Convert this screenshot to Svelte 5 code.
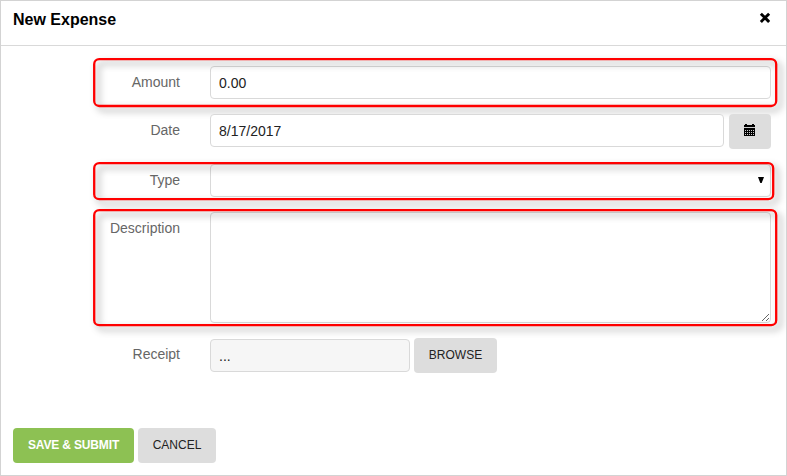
<script>
  let amount = $state('0.00');
  let date = $state('8/17/2017');
  let type = $state('');
  let description = $state('');
</script>

{#snippet ring(width, height)}
  <svg class="ring" {width} {height} aria-hidden="true">
    <rect x="1.2" y="1.2" width={width - 2.4} height={height - 2.4} rx="5" fill="none" stroke="#f00" stroke-width="2.3" />
  </svg>
{/snippet}

<section class="dialog">
  <header>
    <h1>New Expense</h1>
    <button class="close" type="button" aria-label="Close">
      <svg width="12" height="12" viewBox="0 0 12 12"><path d="M2.9 2.7 9.1 8.9M9.1 2.7 2.9 8.9" fill="none" stroke="#000" stroke-width="2.9" stroke-linecap="square" /></svg>
    </button>
  </header>

  <form>
    <div class="row amount">
      <label for="amount">Amount</label>
      <input id="amount" type="text" bind:value={amount} />
      {@render ring(684.4, 49.2)}
    </div>
    <div class="row date">
      <label for="date">Date</label>
      <input id="date" type="text" bind:value={date} />
      <button class="btn calendar" type="button" aria-label="Pick a date">
        <svg width="11" height="12" viewBox="0 0 11 12" shape-rendering="crispEdges">
          <path fill="#000" d="M1 0h2v1h5V0h2v1h1v2H0V1h1zM0 4h11v8H0z" />
          <path fill="#ccc" d="M0 3h11v1H0z" />
          <path fill="#ccc" d="M1 6h1v1H1zM3 6h1v1H3zM5 6h1v1H5zM7 6h1v1H7zM9 6h1v1H9zM1 8h1v1H1zM3 8h1v1H3zM5 8h1v1H5zM7 8h1v1H7zM9 8h1v1H9zM1 10h1v1H1zM3 10h1v1H3zM5 10h1v1H5zM7 10h1v1H7zM9 10h1v1H9z" />
        </svg>
      </button>
    </div>
    <div class="row type">
      <label for="type">Type</label>
      <div class="select">
        <select id="type" bind:value={type}><option value=""></option></select>
        <svg class="arrow" width="6" height="6" viewBox="0 0 6 6"><path d="M0 0h6L3.7 6H2.3z" fill="#000" /></svg>
      </div>
      {@render ring(681.4, 38.4)}
    </div>
    <div class="row description">
      <label for="description">Description</label>
      <textarea id="description" bind:value={description}></textarea>
      {@render ring(684.4, 117.4)}
    </div>
    <div class="row receipt">
      <label for="receipt">Receipt</label>
      <input id="receipt" type="text" value="..." readonly />
      <button class="btn browse" type="button">BROWSE</button>
    </div>
  </form>

  <footer>
    <button class="btn save" type="button">SAVE &amp; SUBMIT</button>
    <button class="btn cancel" type="button">CANCEL</button>
  </footer>
</section>

<style>
  :global(body) { margin: 0; background: #fff; }
  .dialog, .dialog * { box-sizing: border-box; font-family: "Liberation Sans", Arial, sans-serif; }
  .dialog {
    width: 787px;
    height: 476px;
    border: 1px solid #d3d3d3;
    display: flex;
    flex-direction: column;
    overflow: hidden;
    background: #fff;
  }
  header {
    height: 45px;
    flex: none;
    border-bottom: 1px solid #d9d9d9;
    display: flex;
    justify-content: space-between;
    align-items: flex-start;
    padding: 9px 15px 0 12px;
  }
  h1 { margin: 0; font-size: 16px; line-height: 20px; font-weight: 700; color: #000; }
  .close { border: 0; padding: 0; background: none; height: 12px; margin-top: 2px; }
  .close svg { display: block; }
  form { padding: 20px 15px 0 0; flex: 1; }
  .row { position: relative; display: flex; align-items: flex-start; }
  label {
    width: 179px;
    margin-right: 30px;
    flex: none;
    text-align: right;
    font-size: 14px;
    line-height: 32px;
    color: #666;
  }
  input, select, textarea {
    flex: 1;
    min-width: 0;
    height: 33px;
    margin: 0;
    padding: 0 8px;
    border: 1px solid #d9d9d9;
    border-radius: 4px;
    background: #fff;
    color: #222;
    font-size: 14px;
    outline: 0;
  }
  input { padding-top: 1px; }
  .select { position: relative; flex: 1; display: flex; }
  select { appearance: none; }
  .arrow { position: absolute; right: 7px; top: 13px; }
  textarea { height: 111px; resize: both; display: block; }
  .btn {
    height: 35px;
    border: 0;
    padding: 0 0 2px;
    border-radius: 4px;
    background: #ddd;
    color: #222;
    font-size: 12px;
    flex: none;
  }
  .amount { height: 48px; }
  .date { height: 50px; }
  .type { height: 48px; }
  .description { height: 126px; }
  .calendar { width: 42px; margin-left: 5px; padding: 10px 0 0 15px; display: flex; align-items: flex-start; }
  .receipt input { flex: none; width: 200px; margin-top: 1px; background: #f6f6f6; }
  .browse { width: 83px; margin-left: 4px; }
  .ring {
    position: absolute;
    left: 91.8px;
    overflow: visible;
    filter: drop-shadow(4px 4px 3.5px rgba(0, 0, 0, 0.38));
    pointer-events: none;
  }
  .amount .ring { top: -8.4px; }
  .type .ring { top: -2px; }
  .description .ring { top: -3px; }
  footer { display: flex; gap: 4px; padding: 0 12px 12px; }
  .save { width: 121px; background: #8dc153; color: #fff; font-weight: 700; letter-spacing: -0.15px; }
  .cancel { width: 78px; }
</style>
